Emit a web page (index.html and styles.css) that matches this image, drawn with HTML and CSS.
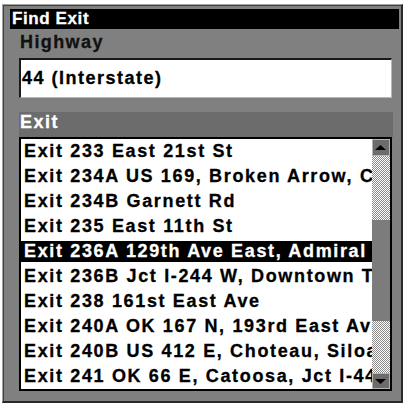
FILE: index.html
```html
<!DOCTYPE html>
<html>
<head>
<meta charset="utf-8">
<link rel="stylesheet" href="styles.css">
</head>
<body>
<div class="frame">
  <div class="title">Find Exit</div>
  <div class="content">
    <div class="label">Highway</div>
    <div class="input">44 (Interstate)</div>
    <div class="header">Exit</div>
    <div class="list">
      <div class="rows">
        <div class="row">Exit 233 East 21st St</div>
        <div class="row">Exit 234A US 169, Broken Arrow, Collinsville</div>
        <div class="row">Exit 234B Garnett Rd</div>
        <div class="row">Exit 235 East 11th St</div>
        <div class="row selected">Exit 236A 129th Ave East, Admiral Pl</div>
        <div class="row">Exit 236B Jct I-244 W, Downtown Tulsa</div>
        <div class="row">Exit 238 161st East Ave</div>
        <div class="row">Exit 240A OK 167 N, 193rd East Ave</div>
        <div class="row">Exit 240B US 412 E, Choteau, Siloam Springs</div>
        <div class="row">Exit 241 OK 66 E, Catoosa, Jct I-44 E</div>
      </div>
      <div class="scrollbar">
        <div class="btn"><svg width="16" height="15" viewBox="0 0 16 15"><polygon points="2,10 13,10 7.5,5" fill="#000"/></svg></div>
        <div class="track track-top"></div>
        <div class="thumb"></div>
        <div class="track track-bottom"></div>
        <div class="btn"><svg width="16" height="14" viewBox="0 0 16 14"><polygon points="2,5 13,5 7.5,10" fill="#000"/></svg></div>
      </div>
    </div>
  </div>
</div>
</body>
</html>
```
FILE: styles.css
```css
* { box-sizing: border-box; }
html, body { margin: 0; padding: 0; background: #fff; }
body { width: 406px; height: 406px; overflow: hidden; font-family: "Liberation Sans", Arial, sans-serif; font-weight: bold; }

.frame {
  margin: 4px 0 0 2px;
  width: 401px;
  height: 399px;
  background: #808080;
  border-left: 1px solid #a4a4a4;
  border-top: 1px solid #a4a4a4;
  border-right: 2px solid #2a2a2a;
  border-bottom: 2px solid #2a2a2a;
  box-shadow: inset 1px 1px 0 #404040;
  padding: 4px 2px 0 7px;
}

.title {
  height: 20px;
  background: #000;
  color: #fff;
  font-size: 17px;
  line-height: 20px;
  letter-spacing: 0.6px;
  padding-left: 2px;
  -webkit-text-stroke: 0.3px #fff;
}

.content {
  margin: 0 7px 0 9px;
  display: flex;
  flex-direction: column;
}

.label {
  margin-top: 3px;
  height: 20px;
  font-size: 18px;
  line-height: 20px;
  letter-spacing: 1.4px;
  color: #111;
  padding-left: 1px;
  -webkit-text-stroke: 0.3px #111;
}

.input {
  margin-top: 6px;
  height: 40px;
  background: #fff;
  border-top: 2px solid #1a1a1a;
  border-left: 2px solid #1a1a1a;
  border-right: 1px solid #b8b8b8;
  border-bottom: 1px solid #b8b8b8;
  font-size: 18px;
  line-height: 37px;
  letter-spacing: 1.5px;
  color: #000;
  padding-left: 1px;
  -webkit-text-stroke: 0.3px #000;
}

.header {
  margin-top: 14px;
  margin-right: -1px;
  height: 25px;
  background: #6c6c6c;
  color: #fff;
  font-size: 18px;
  line-height: 20px;
  letter-spacing: 1.5px;
  padding-left: 1px;
  -webkit-text-stroke: 0.3px #fff;
}

.list {
  height: 254px;
  border: 2px solid #000;
  background: #fff;
  display: flex;
}

.rows {
  flex: 1;
  min-width: 0;
  overflow: hidden;
  display: flex;
  flex-direction: column;
  gap: 4px;
  padding-top: 2px;
}

.row {
  height: 21px;
  line-height: 21px;
  font-size: 18px;
  letter-spacing: 1.65px;
  white-space: nowrap;
  overflow: hidden;
  color: #000;
  padding-left: 3px;
  -webkit-text-stroke: 0.3px #000;
}

.row.selected {
  background: #000;
  color: #fff;
  -webkit-text-stroke: 0.3px #fff;
}

.scrollbar {
  width: 18px;
  display: flex;
  flex-direction: column;
}

.btn {
  height: 17px;
  background: #6c6c6c;
  border: 1px solid #b4b4b4;
  display: flex;
}
.btn:last-child { height: 16px; }

.track {
  background: repeating-conic-gradient(#8a8a8a 0 25%, #ffffff 0 50%) 0 0 / 2px 2px;
}
.track-top { height: 64px; }
.track-bottom { height: 52px; }

.thumb {
  height: 101px;
  background: #7c7c7c;
}
```
